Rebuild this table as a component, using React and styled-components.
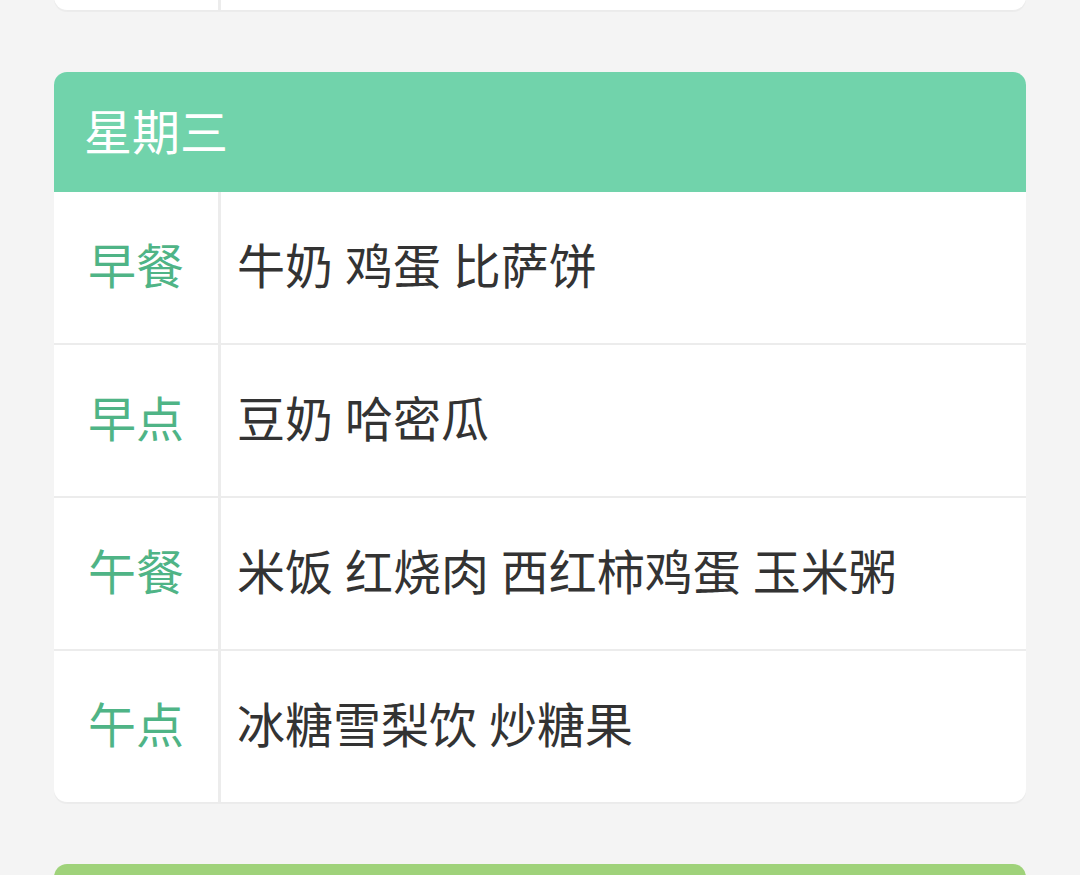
import React from "react";
import styled, { createGlobalStyle } from "styled-components";

const Global = createGlobalStyle`
  html, body {
    margin: 0;
    padding: 0;
    background: #f4f4f4;
    font-family: Roboto, "Noto Sans CJK SC", "Noto Sans", sans-serif;
  }
`;

const Viewport = styled.div`
  width: 1080px;
  height: 875px;
  overflow: hidden;
  background: #f4f4f4;
`;

const List = styled.div`
  display: flex;
  flex-direction: column;
  gap: 62px;
  padding: 0 54px;
  margin-top: ${(p) => p.$offset}px;
`;

const Card = styled.section`
  background: #ffffff;
  border-radius: 13px;
  overflow: hidden;
  box-shadow: 0 2px 1px rgba(0, 0, 0, 0.035);
`;

const Header = styled.div`
  height: 120px;
  box-sizing: border-box;
  background: ${(p) => p.$color};
  color: #ffffff;
  font-size: 48px;
  display: flex;
  align-items: center;
  padding: 0 0 7px 30px;
`;

const Row = styled.div`
  display: grid;
  grid-template-columns: 164px 3px 1fr;
  height: 151px;
  & + & {
    border-top: 2px solid #ececec;
  }
`;

const Label = styled.div`
  display: flex;
  align-items: center;
  justify-content: center;
  padding-bottom: 9px;
  color: #4fb486;
  font-size: 48px;
`;

const Divider = styled.div`
  background: #ececec;
`;

const Content = styled.div`
  display: flex;
  align-items: center;
  padding: 0 0 9px 16px;
  color: #333333;
  font-size: 48px;
  white-space: nowrap;
`;

const days = [
  {
    name: "星期二",
    color: "#9fd27a",
    meals: [
      ["早餐", "牛奶 鸡蛋 小馒头"],
      ["早点", "酸奶 苹果"],
      ["午餐", "米饭 糖醋排骨 清炒西兰花 紫菜汤"],
      ["午点", "红豆汤 饼干"],
    ],
  },
  {
    name: "星期三",
    color: "#71d3ab",
    meals: [
      ["早餐", "牛奶 鸡蛋 比萨饼"],
      ["早点", "豆奶 哈密瓜"],
      ["午餐", "米饭 红烧肉 西红柿鸡蛋 玉米粥"],
      ["午点", "冰糖雪梨饮 炒糖果"],
    ],
  },
  {
    name: "星期四",
    color: "#9fd27a",
    meals: [
      ["早餐", "牛奶 鸡蛋 花卷"],
      ["早点", "豆浆 香蕉"],
      ["午餐", "米饭 土豆烧牛肉 炒青菜 冬瓜汤"],
      ["午点", "绿豆汤 蛋糕"],
    ],
  },
];

export default function App() {
  return (
    <Viewport>
      <Global />
      <List $offset={-720}>
        {days.map((d) => (
          <Card key={d.name}>
            <Header $color={d.color}>{d.name}</Header>
            {d.meals.map(([label, food]) => (
              <Row key={label}>
                <Label>{label}</Label>
                <Divider />
                <Content>{food}</Content>
              </Row>
            ))}
          </Card>
        ))}
      </List>
    </Viewport>
  );
}
